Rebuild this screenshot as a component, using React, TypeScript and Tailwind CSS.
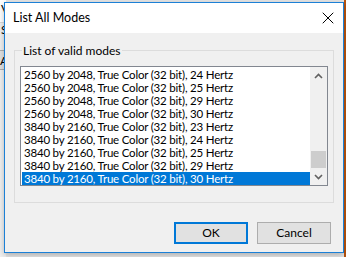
import { X } from 'lucide-react';

const modes = [
  '2560 by 2048, True Color (32 bit), 24 Hertz',
  '2560 by 2048, True Color (32 bit), 25 Hertz',
  '2560 by 2048, True Color (32 bit), 29 Hertz',
  '2560 by 2048, True Color (32 bit), 30 Hertz',
  '3840 by 2160, True Color (32 bit), 23 Hertz',
  '3840 by 2160, True Color (32 bit), 24 Hertz',
  '3840 by 2160, True Color (32 bit), 25 Hertz',
  '3840 by 2160, True Color (32 bit), 29 Hertz',
  '3840 by 2160, True Color (32 bit), 30 Hertz',
];

function Chevron({ down }: { down?: boolean }) {
  return (
    <svg width="9" height="6" viewBox="0 0 9 6" className={down ? 'rotate-180' : ''}>
      <path d="M1 5 L4.5 1.5 L8 5" fill="none" stroke="#606060" strokeWidth="1.6" />
    </svg>
  );
}

export default function App() {
  return (
    <div
      className="relative w-[346px] h-[257px] overflow-hidden bg-[#e6e6e6] text-black"
      style={{ fontFamily: 'Lato, "Noto Sans", sans-serif' }}
    >
      {/* window behind */}
      <div className="absolute left-0 top-0 w-[6px] h-[257px] bg-[#f0f0f0] text-[12px] leading-none">
        <div className="h-[22px] bg-white pt-[3px] pl-[1px]">V</div>
        <div className="pt-[1px] pl-[1px] border-t border-[#d9d9d9]">S</div>
        <div className="mt-[14px] h-[20px] pt-[4px] bg-[#e1e1e1] border-y border-[#adadad]">A</div>
      </div>
      <div className="absolute right-0 top-0 w-[2px] h-[257px] bg-[#b8540f]" />

      {/* dialog */}
      <div className="absolute left-[4px] top-[2px] w-[340px] h-[251px] border border-[#1c80d6] bg-[#f0f0f0] flex flex-col shadow-[0_2px_6px_rgba(0,0,0,0.25)]">
        <div className="h-[30px] bg-white flex items-center justify-between pl-[8px] pr-[5px]">
          <span className="text-[12.5px] leading-none">List All Modes</span>
          <X className="w-[20px] h-[20px] text-black" strokeWidth={1.2} />
        </div>

        <div className="flex-1 flex flex-col px-[9px] pt-[17px]">
          <div className="relative h-[153px] border border-[#dcdcdc] px-[5px] pt-[15px]">
            <span className="absolute left-[7px] top-[-8px] bg-[#f0f0f0] px-[1px] text-[12px] leading-[15px]">
              List of valid modes
            </span>
            <div className="flex h-[120px] border border-[#828790] bg-white">
              <div className="flex-1 flex flex-col pt-[1px] pl-[1px]">
                {modes.map((m, i) => {
                  const selected = i === modes.length - 1;
                  return (
                    <div
                      key={m}
                      className={`h-[13px] pl-[2px] text-[11.5px] leading-[13px] tracking-[-0.2px] whitespace-nowrap ${
                        selected ? 'bg-[#0078d7] text-white' : ''
                      }`}
                    >
                      {m}
                    </div>
                  );
                })}
              </div>
              <div className="w-[17px] flex flex-col bg-[#f0f0f0]">
                <div className="h-[17px] flex items-center justify-center">
                  <Chevron />
                </div>
                <div className="flex-1 relative">
                  <div className="absolute left-[1px] right-[1px] top-[67px] h-[17px] bg-[#cdcdcd]" />
                </div>
                <div className="h-[17px] flex items-center justify-center">
                  <Chevron down />
                </div>
              </div>
            </div>
          </div>

          <div className="flex justify-end gap-[9px] mt-[19px] pr-[3px]">
            <button className="w-[74px] h-[22px] bg-[#e1e1e1] border-2 border-[#0078d7] text-[12px] leading-none">
              OK
            </button>
            <button className="w-[74px] h-[22px] bg-[#e1e1e1] border border-[#adadad] text-[12px] leading-none">
              Cancel
            </button>
          </div>
        </div>
      </div>
    </div>
  );
}
